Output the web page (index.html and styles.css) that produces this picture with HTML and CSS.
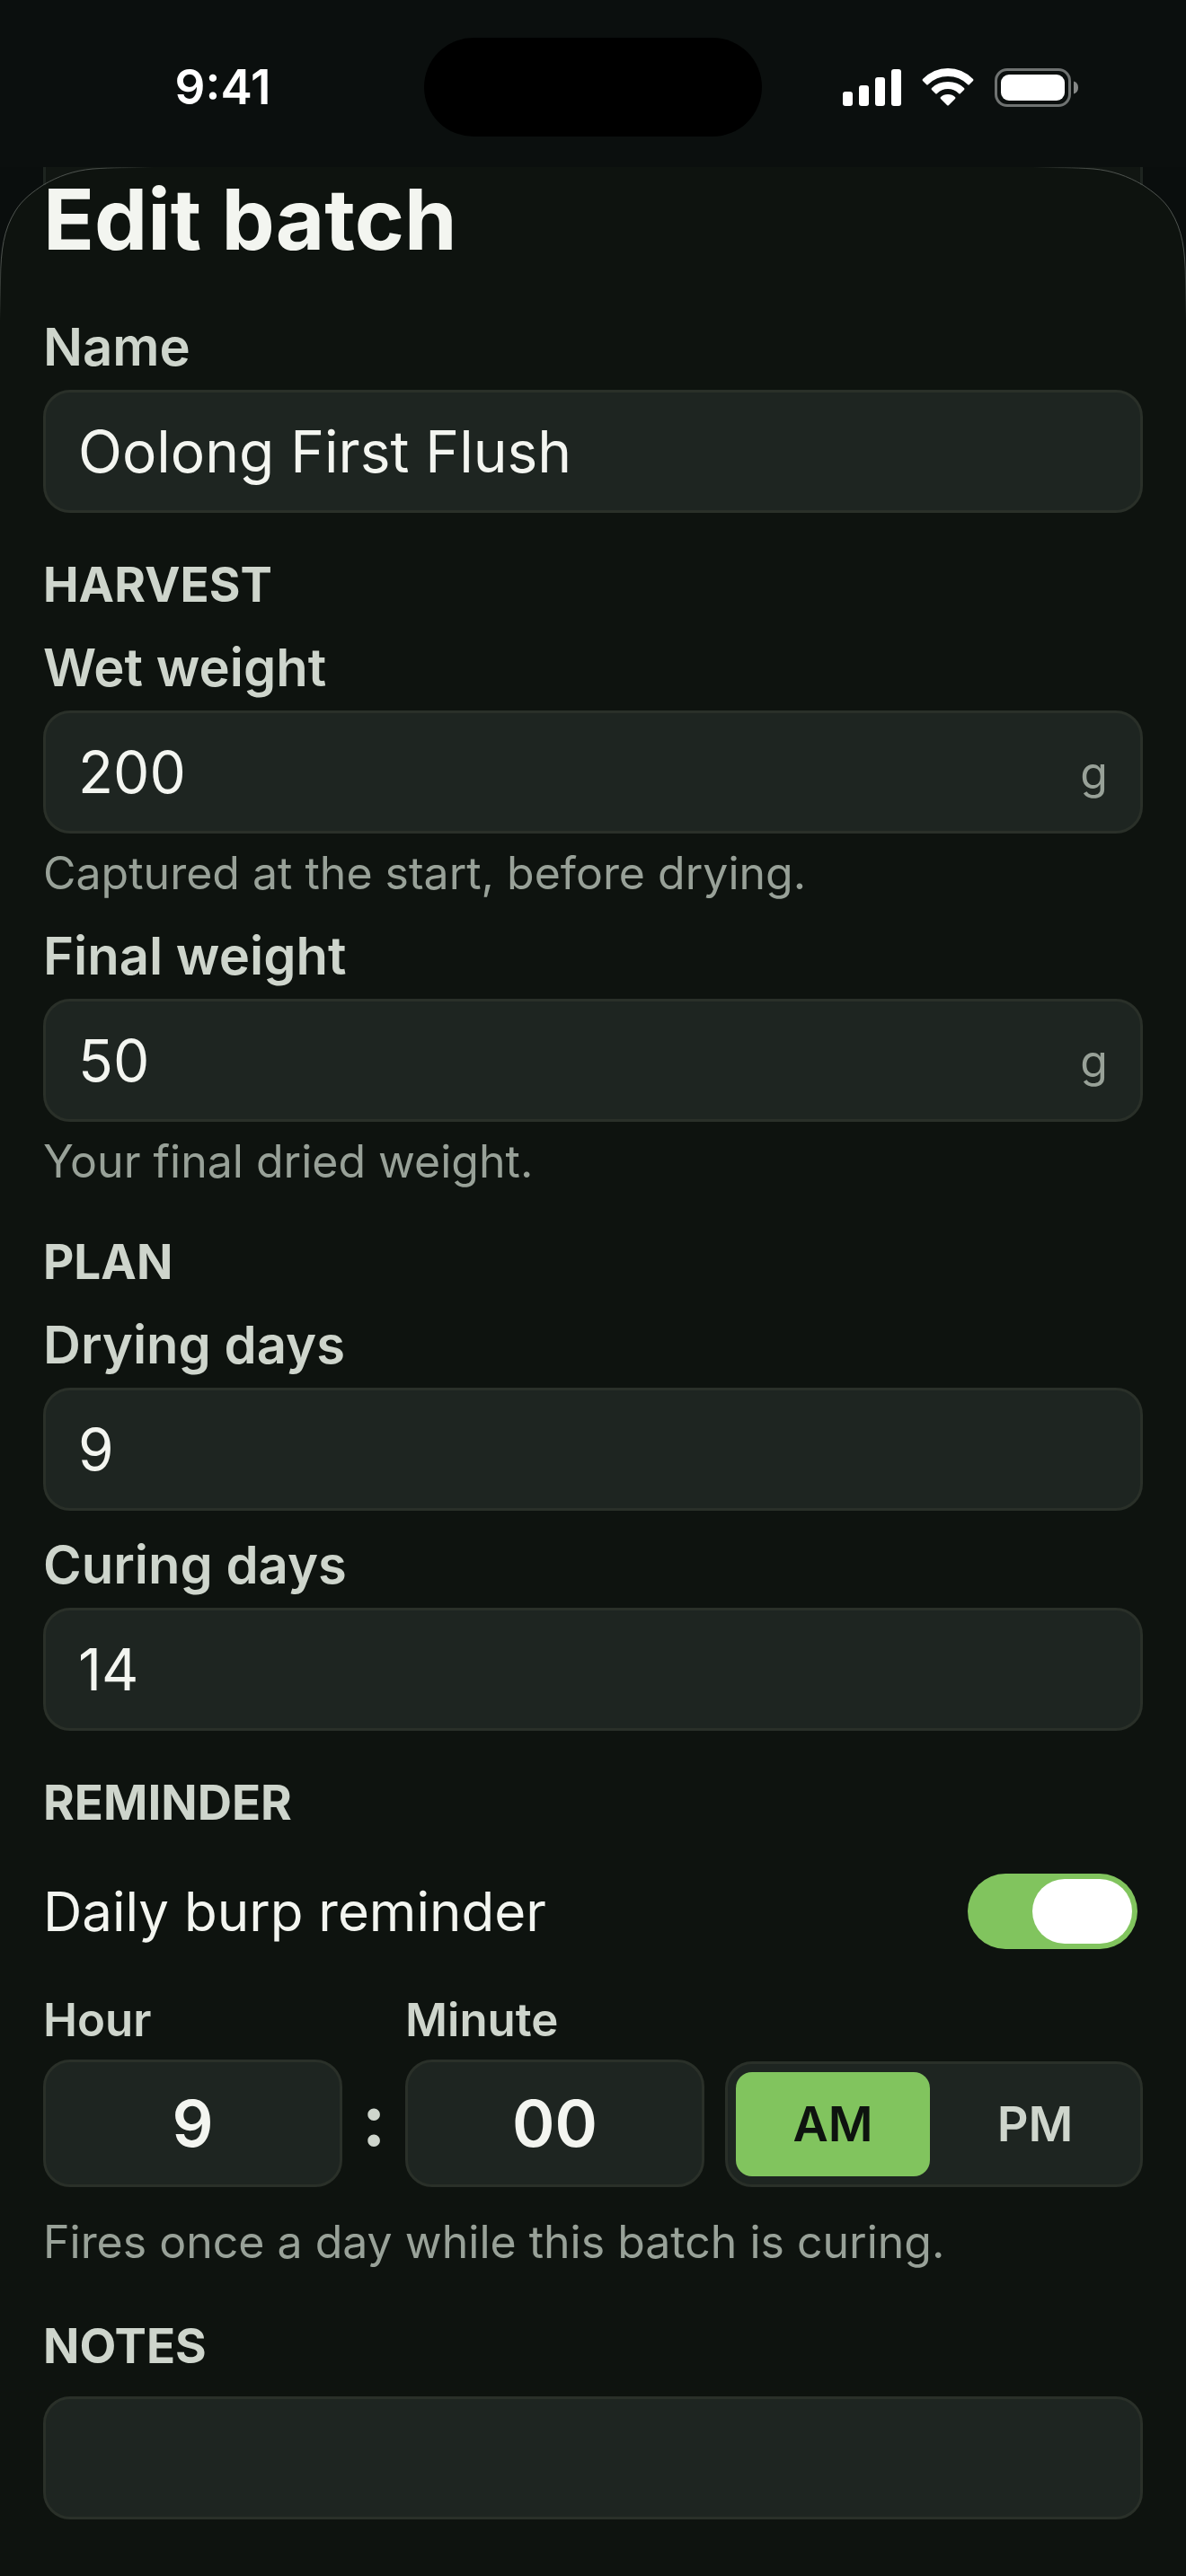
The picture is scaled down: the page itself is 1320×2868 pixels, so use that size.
FILE: index.html
```html
<!DOCTYPE html>
<html lang="en">
<head>
<meta charset="utf-8">
<meta name="viewport" content="width=device-width, initial-scale=1">
<title>Edit batch</title>
<link rel="stylesheet" href="styles.css">
</head>
<body>
<header class="status-bar">
  <time class="clock">9:41</time>
  <div class="island"></div>
  <div class="indicators">
    <svg class="signal" viewBox="0 0 65 43" aria-hidden="true"><rect x="0" y="26" width="11" height="16" rx="3"/><rect x="18" y="19" width="11" height="23" rx="3"/><rect x="36" y="10" width="11" height="32" rx="3"/><rect x="54" y="1" width="11" height="41" rx="3"/></svg>
    <svg class="wifi" viewBox="0 0 58 43" aria-hidden="true"><path d="M1 12Q13 0 29 0T57 12Q58 13 57 14L53 18Q52 19 51 18Q42 9 29 9T7 18Q6 19 5 18L1 14Q0 13 1 12ZM11 22Q18 15 29 15T47 22Q48 23 47 24L43 28Q42 29 41 28Q36 23 29 23T17 28Q16 29 15 28L11 24Q10 23 11 22ZM21 32Q24 29 29 29T37 32Q38 33 37 34L30 41Q29 42 28 41L21 34Q20 33 21 32Z"/></svg>
    <svg class="battery" viewBox="0 0 94 43" aria-hidden="true"><rect class="shell" x="1.500" y="1.500" width="82" height="40" rx="12.500"/><rect x="7" y="7" width="71" height="29" rx="9"/><path class="cap" d="M88 14.500Q93 16 93 21.500T88 28.500Z"/></svg>
  </div>
</header>
<main class="sheet">
  <svg class="corner" viewBox="0 0 220 220" aria-hidden="true">
    <defs><linearGradient id="rim" x1="0" y1="1" x2="1" y2="0"><stop offset="0" stop-color="#4e534f" stop-opacity="0"/><stop offset=".2" stop-color="#4e534f"/><stop offset=".8" stop-color="#4e534f"/><stop offset="1" stop-color="#4e534f" stop-opacity="0"/></linearGradient></defs>
    <path class="backdrop" d="M0 0H48V20C36 28 25 36 17 49C4 70 1 92 0 125Z"/>
    <path class="card" d="M48 0H150C125 0 120 1 103 2C82 4 65 10 48 20Z"/>
    <path class="edge" d="M49.500 0V20"/>
    <path class="curve" d="M.5 170V125C1 92 4 70 17 49C25 36 36 28 48 20C65 10 82 4 103 2C125 .5 145 .5 170 .5"/>
  </svg>
  <svg class="corner corner-right" viewBox="0 0 220 220" aria-hidden="true">
    <path class="backdrop" d="M0 0H48V20C36 28 25 36 17 49C4 70 1 92 0 125Z"/>
    <path class="card" d="M48 0H150C125 0 120 1 103 2C82 4 65 10 48 20Z"/>
    <path class="edge" d="M49.500 0V20"/>
    <path class="curve" d="M.5 170V125C1 92 4 70 17 49C25 36 36 28 48 20C65 10 82 4 103 2C125 .5 145 .5 170 .5"/>
  </svg>
  <h1 class="title">Edit batch</h1>
  <form class="form">
    <div class="field">
      <label class="label" for="name">Name</label>
      <div class="box"><input class="input" id="name" type="text" value="Oolong First Flush"></div>
    </div>
    <section class="section">
      <h2 class="heading">HARVEST</h2>
      <div class="field">
        <label class="label" for="wet">Wet weight</label>
        <div class="box"><input class="input" id="wet" type="text" inputmode="decimal" value="200"><span class="unit">g</span></div>
        <p class="hint">Captured at the start, before drying.</p>
      </div>
      <div class="field">
        <label class="label" for="final">Final weight</label>
        <div class="box"><input class="input" id="final" type="text" inputmode="decimal" value="50"><span class="unit">g</span></div>
        <p class="hint">Your final dried weight.</p>
      </div>
    </section>
    <section class="section">
      <h2 class="heading">PLAN</h2>
      <div class="field">
        <label class="label" for="drying">Drying days</label>
        <div class="box"><input class="input" id="drying" type="text" inputmode="numeric" value="9"></div>
      </div>
      <div class="field">
        <label class="label" for="curing">Curing days</label>
        <div class="box"><input class="input" id="curing" type="text" inputmode="numeric" value="14"></div>
      </div>
    </section>
    <section class="section">
      <h2 class="heading">REMINDER</h2>
      <div class="switch-row">
        <label class="switch-label" for="reminder">Daily burp reminder</label>
        <input class="switch" id="reminder" type="checkbox" role="switch" checked>
      </div>
      <div class="time-row">
        <div class="field">
          <label class="label small" for="hour">Hour</label>
          <div class="box time-box"><input class="input time-input" id="hour" type="text" inputmode="numeric" value="9"></div>
        </div>
        <span class="colon">:</span>
        <div class="field">
          <label class="label small" for="minute">Minute</label>
          <div class="box time-box"><input class="input time-input" id="minute" type="text" inputmode="numeric" value="00"></div>
        </div>
        <div class="segments">
          <button class="segment selected" type="button" aria-pressed="true">AM</button>
          <button class="segment" type="button" aria-pressed="false">PM</button>
        </div>
      </div>
      <p class="hint time-hint">Fires once a day while this batch is curing.</p>
    </section>
    <section class="section">
      <h2 class="heading" id="notes-heading">NOTES</h2>
      <div class="box"><input class="input" type="text" aria-labelledby="notes-heading"></div>
    </section>
  </form>
</main>
</body>
</html>
```
FILE: styles.css
```css
:root {
  --bg: #0e130f;
  --field: #1e2521;
  --line: #2a3029;
  --text: #f3f5f0;
  --soft: #ced5cc;
  --muted: #98a198;
  --accent: #81c45e;
}

* { box-sizing: border-box; }

body {
  margin: 0;
  min-height: 100vh;
  background: var(--bg);
  color: var(--text);
  font-family: Inter, "Liberation Sans", sans-serif;
}

h1, h2, p { margin: 0; }

.status-bar {
  display: grid;
  grid-template-columns: 1fr 376px 1fr;
  align-items: center;
  height: 186px;
  padding: 8px 0 0;
  background: #0b0f0e;
  color: #fff;
}

.clock {
  padding-left: 24px;
  text-align: center;
  font-size: 53px;
  font-weight: 600;
  line-height: 64px;
}

.island {
  height: 110px;
  border-radius: 55px;
  background: #000;
}

.indicators {
  display: flex;
  justify-content: center;
  gap: 23px;
  padding-right: 30px;
}

.indicators svg { height: 43px; fill: #fff; }
.signal { width: 65px; }
.wifi { width: 58px; }
.battery { width: 94px; }
.battery .shell { fill: none; stroke: #6f7271; stroke-width: 3; }
.battery .cap { fill: #858786; }

.sheet {
  position: relative;
  padding: 0 48px 56px;
}

.corner {
  position: absolute;
  top: 0;
  left: 0;
  width: 220px;
  height: 220px;
  fill: none;
  pointer-events: none;
}

.corner-right {
  right: 0;
  left: auto;
  transform: scaleX(-1);
}

.backdrop { fill: #0a0e0d; }
.card { fill: #111612; }
.curve { stroke: url(#rim); stroke-width: 1; }
.edge { stroke: #1e2420; stroke-width: 3; }

.title {
  position: relative;
  margin-bottom: 48px;
  font-size: 94px;
  font-weight: 700;
  line-height: 116px;
}

.form, .section {
  display: flex;
  flex-direction: column;
  gap: 24px;
}

.section { margin-top: 24px; }

.field {
  display: flex;
  flex-direction: column;
  gap: 12px;
}

.label {
  color: var(--soft);
  font-size: 58px;
  font-weight: 600;
  line-height: 72px;
}

.small { font-size: 51px; line-height: 64px; }

.heading {
  color: var(--soft);
  font-size: 53px;
  font-weight: 700;
  line-height: 64px;
}

.box {
  display: flex;
  align-items: center;
  gap: 24px;
  height: 137px;
  padding: 0 36px;
  border: 3px solid var(--line);
  border-radius: 30px;
  background: var(--field);
}

.input {
  flex: 1;
  min-width: 0;
  width: 100%;
  padding: 0;
  border: 0;
  outline: 0;
  background: none;
  color: var(--text);
  font: 400 64px/84px Inter, "Liberation Sans", sans-serif;
}

.unit, .hint {
  color: var(--muted);
  font-size: 50px;
  line-height: 64px;
}

.switch-row {
  display: flex;
  align-items: center;
  justify-content: space-between;
  height: 130px;
  padding-right: 6px;
}

.switch-label { font-size: 60px; line-height: 76px; }

.switch {
  display: flex;
  justify-content: flex-end;
  width: 189px;
  height: 84px;
  margin: 0;
  padding: 6px;
  appearance: none;
  border-radius: 42px;
  background: var(--accent);
}

.switch::before {
  width: 111px;
  border-radius: 36px;
  background: #fff;
  content: "";
}

.time-row {
  display: grid;
  grid-template-columns: 333fr 70px 333fr 488fr;
  align-items: end;
}

.time-box { height: 142px; }

.time-input {
  text-align: center;
  font-size: 72px;
  font-weight: 600;
}

.colon {
  color: var(--soft);
  text-align: center;
  font-size: 80px;
  font-weight: 700;
  line-height: 150px;
}

.segments {
  display: flex;
  gap: 9px;
  height: 140px;
  margin-left: 23px;
  padding: 9px;
  border: 3px solid var(--line);
  border-radius: 30px;
  background: var(--field);
}

.segment {
  flex: 1;
  padding: 0;
  border: 0;
  border-radius: 18px;
  background: none;
  color: var(--soft);
  font: 600 54px/64px Inter, "Liberation Sans", sans-serif;
}

.selected { background: var(--accent); color: var(--bg); }
.time-hint { margin: 5px 0 4px; }
```
